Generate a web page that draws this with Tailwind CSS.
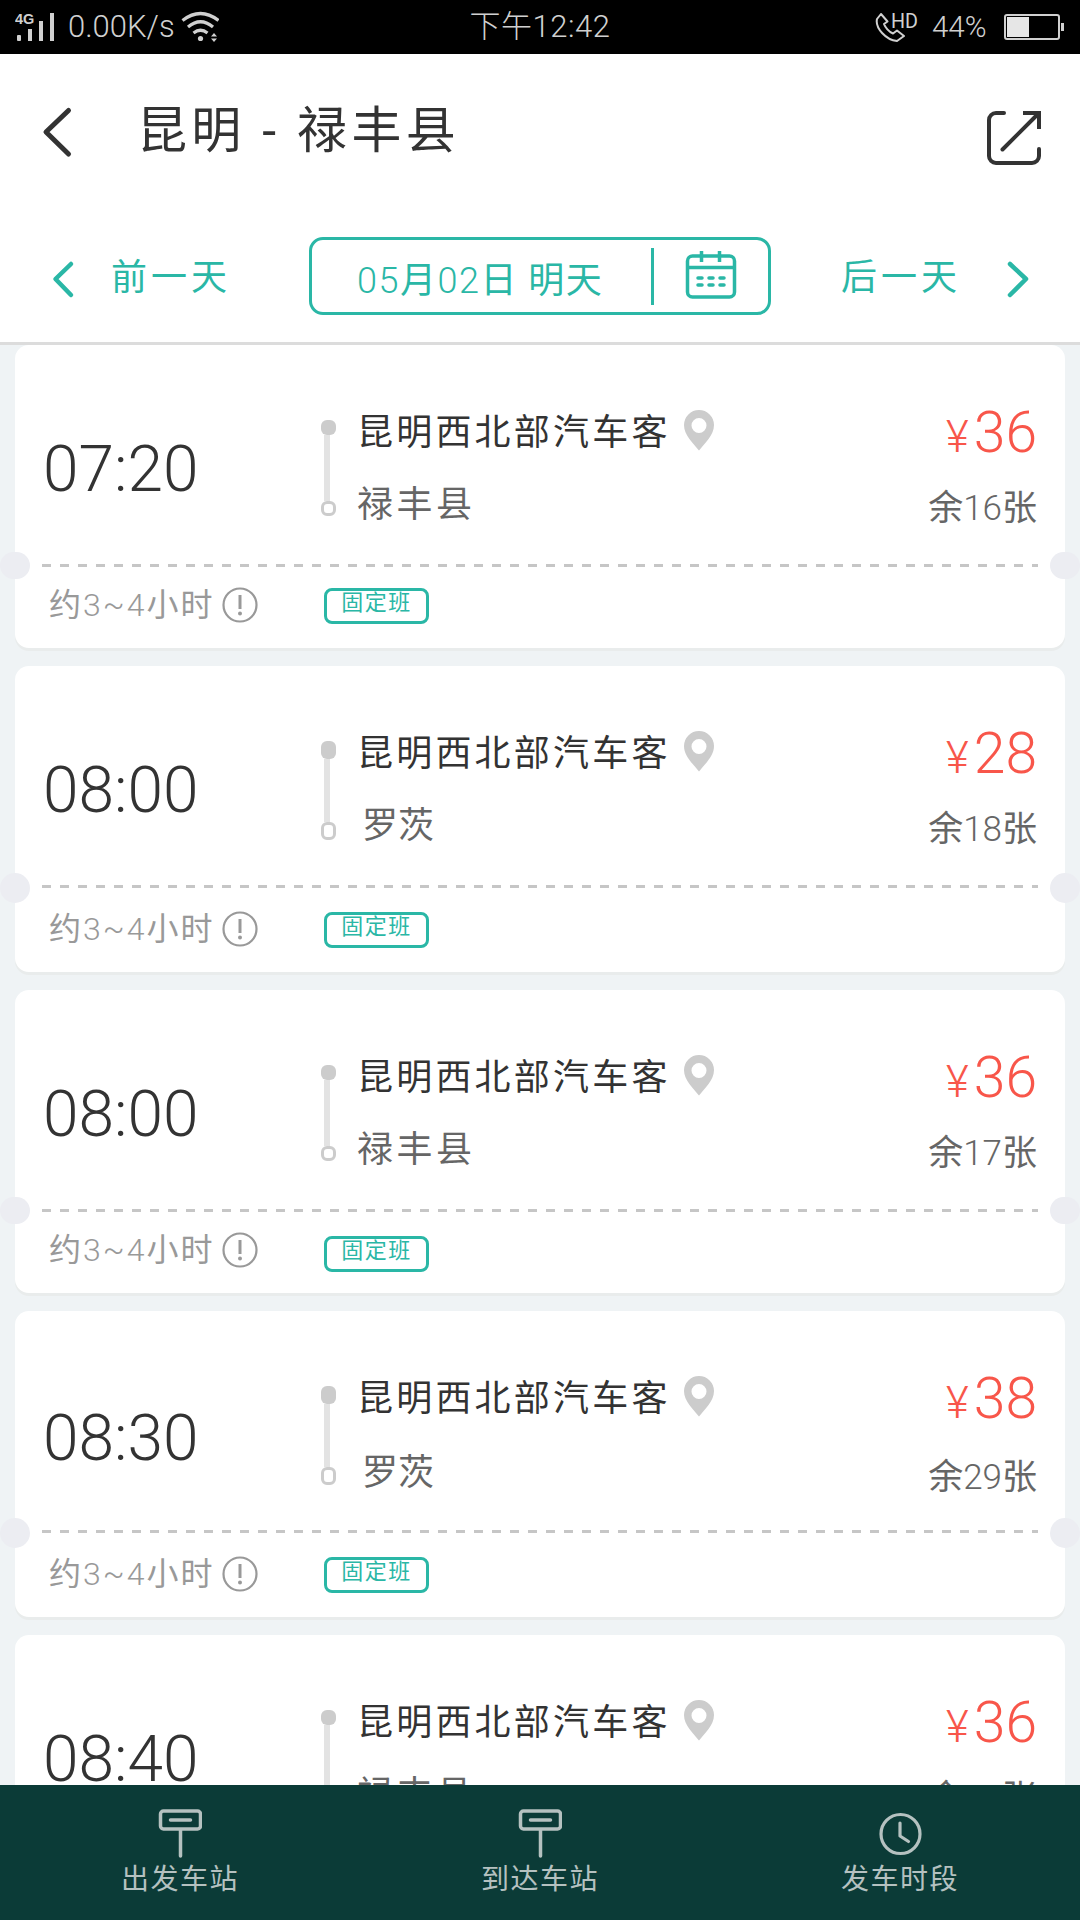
<!DOCTYPE html>
<html lang="zh-CN">
<head>
<meta charset="utf-8">
<title>昆明 - 禄丰县</title>
<script src="https://cdn.jsdelivr.net/npm/@tailwindcss/browser@4"></script>
</head>
<body class="w-[1080px] h-[1920px] overflow-hidden bg-[#eff3f5] font-[Roboto,'Noto_Sans_CJK_SC',sans-serif] text-[#333] flex flex-col">

<!-- status bar -->
<header class="h-[54px] shrink-0 bg-black text-[#d0d0d0] font-light text-[30px] leading-[54px] grid grid-cols-[1fr_auto_1fr] whitespace-nowrap">
  <div class="flex items-center pl-[15px]">
    <svg class="w-[42px] h-[54px] shrink-0" viewBox="15 0 42 54" fill="#d0d0d0">
      <text x="15" y="24" font-family="Liberation Sans" font-weight="bold" font-size="14.5">4G</text>
      <rect x="17" y="35" width="4" height="6" rx="1"/><rect x="28" y="29" width="4" height="12"/><rect x="39" y="21" width="4" height="20"/><rect x="50" y="13" width="4" height="28"/>
    </svg>
    <span class="pl-[11px] w-[124px] shrink-0 text-[31px]">0.00K/s</span>
    <svg class="w-[38px] h-[54px] shrink-0" viewBox="181 0 38 54" fill="none" stroke="#d0d0d0" stroke-width="3.2">
      <path d="M182.500 20.500Q200.500 6.500 218.500 20.500M188 27Q200.500 16.500 213 27M193.500 33Q200.500 27.500 207.500 33"/>
      <circle cx="200.500" cy="38.500" r="2.600" fill="#d0d0d0" stroke="none"/>
      <path d="M211 36.500l3-3.500 3 3.500zM211 38.500l3 3.500 3-3.500z" fill="#d0d0d0" stroke="none"/>
    </svg>
  </div>
  <div class="text-[31px] tracking-[0.5px]">下午12:42</div>
  <div class="flex items-center justify-end pr-[15px]">
    <svg class="w-[44px] h-[54px] shrink-0" viewBox="875 0 44 54" fill="none" stroke="#d0d0d0" stroke-width="2" stroke-linejoin="round">
      <path d="M881 14L877 19C875 28 886 40 897 41L904 36L897 30.500L893 33.500C889 32 885 27 884 24L887.500 21.500Z"/>
      <text x="891" y="28" font-family="Roboto" font-weight="400" font-size="20.5" textLength="27" lengthAdjust="spacingAndGlyphs" fill="#d0d0d0" stroke="none">HD</text>
    </svg>
    <span class="pl-[13px] w-[85px] shrink-0 text-[29.500px]">44%</span>
    <svg class="w-[61px] h-[54px] shrink-0" viewBox="1004 0 61 54">
      <rect x="1005" y="15" width="54" height="24" rx="2" fill="none" stroke="#d0d0d0" stroke-width="2"/>
      <rect x="1007" y="17" width="22" height="20" fill="#e6e6e6"/><rect x="1061" y="23" width="3" height="8" fill="#d0d0d0"/>
    </svg>
  </div>
</header>

<!-- title -->
<div class="h-[148px] shrink-0 bg-white flex items-start pl-[41px] pr-[39px]">
  <svg class="w-[32px] h-[54px] mt-[51px]" viewBox="41 105 32 54" fill="none" stroke="#333" stroke-width="5" stroke-linecap="round" stroke-linejoin="round"><path d="M68.500 110.500L46 132L68.500 154"/></svg>
  <h1 class="mt-[47px] ml-[64px] text-[50px] leading-[60px] tracking-[4.3px] grow whitespace-nowrap">昆明 - 禄丰县</h1>
  <svg class="w-[54px] h-[54px] mt-[57px]" viewBox="0 0 54 54" fill="none" stroke="#333" stroke-width="4" stroke-linecap="round"><path d="M17 2H9a7 7 0 0 0-7 7V45a7 7 0 0 0 7 7H45a7 7 0 0 0 7-7V38M15.500 38.500L50 4"/><path d="M36 2H52V18" stroke-linecap="butt"/></svg>
</div>

<!-- date switcher -->
<nav class="h-[143px] shrink-0 bg-white border-b-3 border-[#dcdcdc] text-[#2ab7a6] flex items-start text-[36px] leading-[50px] whitespace-nowrap">
  <svg class="w-[24px] h-[40px] ml-[51px] mt-[57px]" viewBox="51 259 24 40" fill="none" stroke="#2ab7a6" stroke-width="4.500" stroke-linecap="round" stroke-linejoin="round"><path d="M71 264L55.500 279L71 295"/></svg>
  <span class="ml-[36px] mt-[51px] w-[198px] tracking-[4px]">前一天</span>
  <div class="mt-[35px] w-[462px] h-[78px] border-3 border-[#2ab7a6] rounded-[14px] flex items-center">
    <span class="pl-[45px] pt-[10px] w-[339px] text-[36px] tracking-[1.5px]"><span class="font-light">05</span>月<span class="font-light">02</span>日 明天</span>
    <i class="block w-[3px] h-[57px] bg-[#2ab7a6]"></i>
    <svg class="w-[52px] h-[50px] ml-[31px]" viewBox="686 251 52 50" fill="none" stroke="#2ab7a6" stroke-width="3.500"><rect x="688.500" y="256" width="47" height="41" rx="5"/><path d="M688 267.500H736M702.500 251V262M720.500 251V262"/><path d="M699 278h4M710 278h4M721 278h4M699 285h4M710 285h4M721 285h4" stroke-linecap="round"/></svg>
  </div>
  <span class="ml-[70px] mt-[51px] w-[165px] tracking-[4px]">后一天</span>
  <svg class="w-[24px] h-[40px] mt-[57px]" viewBox="1006 259 24 40" fill="none" stroke="#2ab7a6" stroke-width="4.500" stroke-linecap="round" stroke-linejoin="round"><path d="M1010 264L1026 279L1010 295"/></svg>
</nav>

<!-- departures -->
<main id="list" class="h-[1440px] shrink-0 overflow-hidden px-[15px] flex flex-col gap-[18px]"></main>

<!-- bottom tabs -->
<footer class="h-[135px] shrink-0 bg-[#0b3b37] text-[#b5c1c0] grid grid-cols-3 text-[28px] leading-[36px] tracking-[1.5px]">
  <div class="flex flex-col items-center pt-[24px]">
    <svg class="w-[44px] h-[50px]" viewBox="0 0 44 50" fill="none" stroke="#b5c1c0" stroke-width="3.500" stroke-linecap="round"><rect x="2.500" y="2" width="40" height="18" rx="3"/><path d="M12.500 11H32.500M22.500 21V47"/></svg>
    <span class="mt-[3px]">出发车站</span>
  </div>
  <div class="flex flex-col items-center pt-[24px]">
    <svg class="w-[44px] h-[50px]" viewBox="0 0 44 50" fill="none" stroke="#b5c1c0" stroke-width="3.500" stroke-linecap="round"><rect x="2.500" y="2" width="40" height="18" rx="3"/><path d="M12.500 11H32.500M22.500 21V47"/></svg>
    <span class="mt-[3px]">到达车站</span>
  </div>
  <div class="flex flex-col items-center pt-[24px]">
    <svg class="w-[44px] h-[50px]" viewBox="0 0 44 50" fill="none" stroke="#b5c1c0" stroke-width="3.200" stroke-linecap="round" stroke-linejoin="round"><circle cx="22.500" cy="25" r="19.500"/><path d="M22 14V27L30.500 32.500"/></svg>
    <span class="mt-[3px]">发车时段</span>
  </div>
</footer>

<script>
  // tall: 306px card with taller route markers; the other offsets shift rows by a few pixels
  const trips = [
    { time: '07:20', to: '禄丰县', price: 36, left: 16, tall: false, shift: 0, info: 0, tag: 0 },
    { time: '08:00', to: '罗茨', price: 28, left: 18, tall: true, shift: 0, info: 3, tag: 3 },
    { time: '08:00', to: '禄丰县', price: 36, left: 17, tall: false, shift: 0, info: 0, tag: 3 },
    { time: '08:30', to: '罗茨', price: 38, left: 29, tall: true, shift: 3, info: 3, tag: 3 },
    { time: '08:40', to: '禄丰县', price: 36, left: 15, tall: false, shift: 0, info: 0, tag: 0 },
  ];
  document.getElementById('list').innerHTML = trips.map(t => `
  <section class="relative shrink-0 bg-white rounded-[14px] shadow-[0_3px_0_#e9ecec] whitespace-nowrap ${t.tall ? 'h-[306px]' : 'h-[303px]'}">
    <div class="h-[219px] flex items-start pl-[28px] pr-[28px]">
      <div class="w-[278px] text-[64px] leading-[70px] font-light" style="margin-top:${90 + t.shift}px">${t.time}</div>
      <div class="w-[15px] mt-[75px] flex flex-col">
        <i class="block w-[15px] rounded-[6px] bg-[#ccc] ${t.tall ? 'h-[18px]' : 'h-[15px]'}"></i>
        <i class="block w-[6px] ml-[3px] bg-[#e3e3e3] ${t.tall ? 'h-[63px]' : 'h-[66px]'}"></i>
        <i class="block w-[15px] rounded-[6px] border-3 border-[#ccc] ${t.tall ? 'h-[18px]' : 'h-[15px]'}"></i>
      </div>
      <div class="ml-[21px] mt-[63px] grow text-[36px] leading-[50px]">
        <div class="flex items-start">
          <span class="tracking-[3.2px]">昆明西北部汽车客</span>
          <svg class="w-[30px] h-[41px] mt-[2px] ml-[13px]" viewBox="0 0 30 41" fill="#ccc" fill-rule="evenodd"><path d="M15 0A15 15 0 0 0 0 15C0 25 9 33 15 40.500C21 33 30 25 30 15A15 15 0 0 0 15 0ZM15 8a7.500 7.500 0 1 1 0 15a7.500 7.500 0 1 1 0-15Z"/></svg>
        </div>
        <div class="text-[#666] ${t.to.length === 2 ? 'pl-[5px]' : 'tracking-[3.5px]'}" style="margin-top:${22 + t.shift * 0.7}px">${t.to}</div>
      </div>
      <div class="mt-[53px] flex flex-col items-end">
        <div class="text-[#f8564a] text-[57px] leading-[70px] font-light flex items-baseline gap-[5px]"><span class="text-[44px] leading-[70px]">¥</span><span>${t.price}</span></div>
        <div class="text-[#666] text-[35px] leading-[50px]" style="margin-top:${12 + t.shift}px">余<span class="font-light">${t.left}</span>张</div>
      </div>
    </div>
    <div class="h-[3px] ml-[27px] mr-[27px] bg-[repeating-linear-gradient(to_right,#c6c6c6_0_9px,transparent_9px_18px)]"></div>
    <i class="absolute top-[207px] -left-[15px] w-[30px] rounded-[15px] bg-[#ecedf2] ${t.tall ? 'h-[30px]' : 'h-[27px]'}"></i>
    <i class="absolute top-[207px] -right-[15px] w-[30px] rounded-[15px] bg-[#ecedf2] ${t.tall ? 'h-[30px]' : 'h-[27px]'}"></i>
    <div class="flex items-start pl-[34px]">
      <div class="flex items-center w-[275px] h-[36px] text-[#999] text-[32px] tracking-[2px]" style="margin-top:${20 + t.info}px">
        <span class="w-[173px]">约<span class="font-light">3~4</span>小时</span>
        <svg class="w-[36px] h-[36px]" viewBox="0 0 36 36" fill="none" stroke="#999" stroke-width="2.200"><circle cx="18" cy="18" r="16.500"/><path d="M18 8V22" stroke-width="3"/><circle cx="18" cy="26.500" r="2" fill="#999" stroke="none"/></svg>
      </div>
      <div class="w-[105px] h-[36px] border-3 border-[#2ab7a6] rounded-[8px] text-[#2ab7a6] text-[22px] leading-[24px] tracking-[1.5px] text-center" style="margin-top:${21 + t.tag}px">固定班</div>
    </div>
  </section>`).join('');
</script>
</body>
</html>
